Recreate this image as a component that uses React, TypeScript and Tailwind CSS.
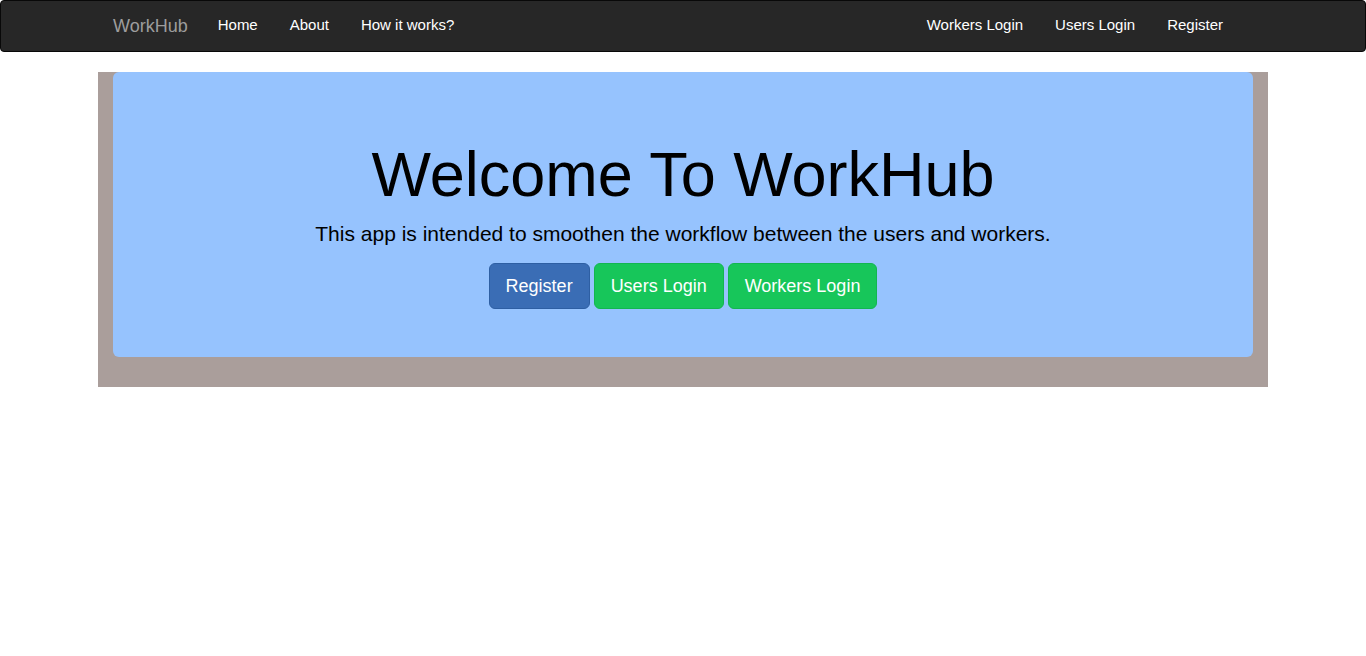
const navLinks = ['Home', 'About', 'How it works?'];
const rightLinks = ['Workers Login', 'Users Login', 'Register'];

export default function App() {
  return (
    <div className="min-h-[656px] bg-white font-['Liberation_Sans',Arial,sans-serif] text-[14px] text-[#333]">
      <nav className="h-[52px] rounded-[4px] border border-[#080808] bg-[#272727]">
        <div className="mx-auto flex h-[50px] w-[1170px] items-center justify-between pb-[2px]">
          <div className="flex items-center">
            <a className="mt-[2px] pl-[15px] pr-[14px] text-[18px] leading-[20px] text-[#9d9d9d]">WorkHub</a>
            {navLinks.map((l) => (
              <a key={l} className="px-[16px] text-[15px] leading-[20px] text-white">
                {l}
              </a>
            ))}
          </div>
          <div className="flex items-center pr-[29px]">
            {rightLinks.map((l) => (
              <a key={l} className="px-[16px] text-[15px] leading-[20px] text-white">
                {l}
              </a>
            ))}
          </div>
        </div>
      </nav>

      <div className="mx-auto mt-[20px] w-[1170px] bg-[#aa9e9b] px-[15px] pb-[30px]">
        <div className="rounded-[6px] bg-[#96c3fe] py-[48px] text-center text-black">
          <h1 className="mt-[20px] text-[63px] leading-[69px]">Welcome To WorkHub</h1>
          <p className="mt-[10px] text-[21px] leading-[30px]">
            This app is intended to smoothen the workflow between the users and workers.
          </p>
          <div className="mt-[14px] flex justify-center gap-[4px]">
            <button className="h-[46px] rounded-[6px] border border-[#2e5fa3] bg-[#3a6db5] px-[16px] text-[18px] text-white">
              Register
            </button>
            <button className="h-[46px] rounded-[6px] border border-[#13b650] bg-[#17c65a] px-[16px] text-[18px] text-white">
              Users Login
            </button>
            <button className="h-[46px] rounded-[6px] border border-[#13b650] bg-[#17c65a] px-[16px] text-[18px] text-white">
              Workers Login
            </button>
          </div>
        </div>
      </div>
    </div>
  );
}
